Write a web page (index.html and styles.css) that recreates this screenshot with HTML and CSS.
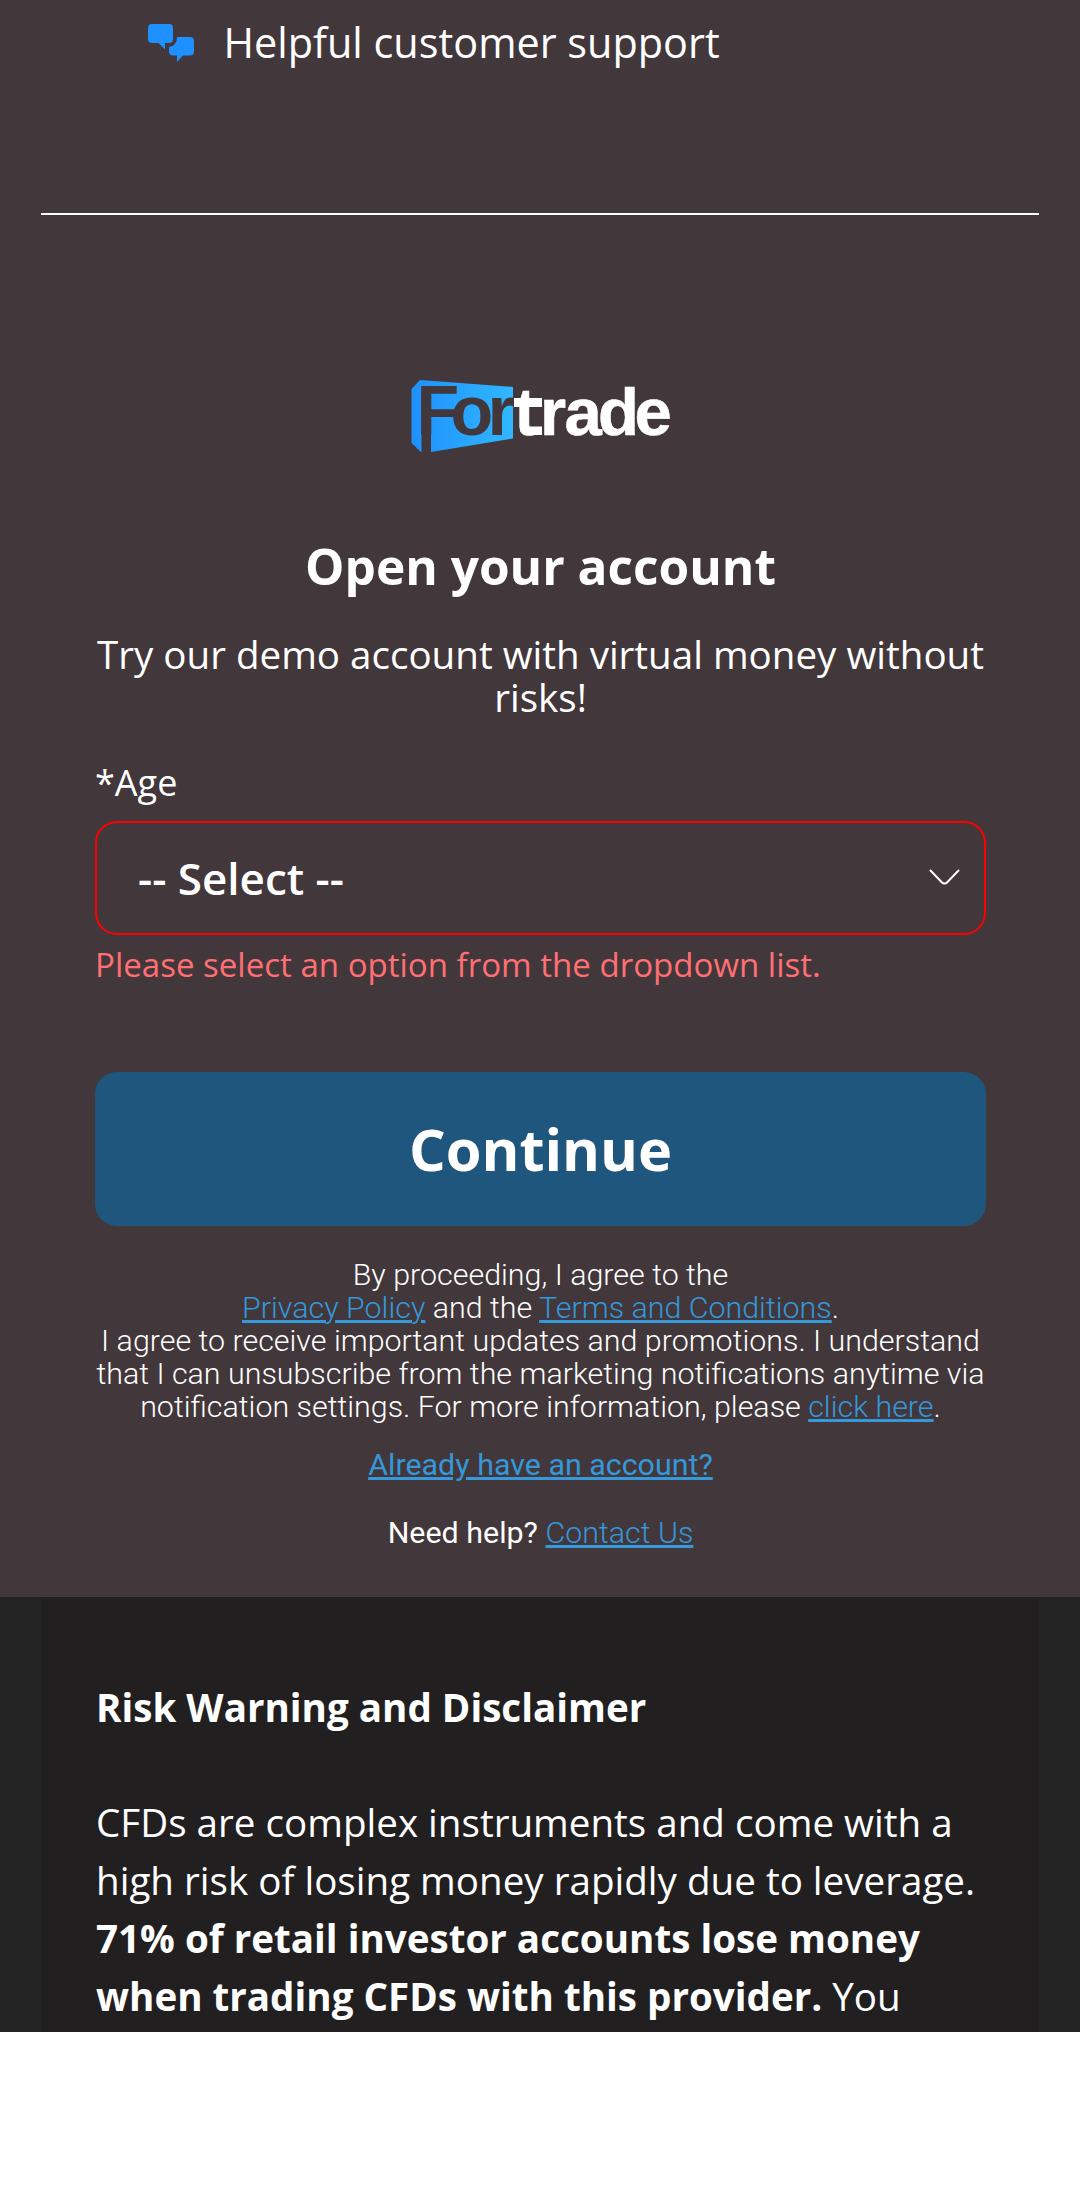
FILE: index.html
```html
<!DOCTYPE html>
<html lang="en">
<head>
<meta charset="utf-8">
<title>Fortrade</title>
<link rel="stylesheet" href="styles.css">
</head>
<body>
<main class="page">
  <section class="features">
    <div class="feature">
      <svg class="feature-icon" width="46" height="38" viewBox="0 0 46 38" fill="#1e90ff">
        <path d="M4 0H21Q25 0 25 4V15Q25 19 21 19H17V25.5L10.500 19H4Q0 19 0 15V4Q0 0 4 0Z"/>
        <path d="M29 13H42Q46 13 46 17V27.500Q46 31.500 42 31.500H35L29 38V31.500H25Q21 31.500 21 27.500V23Q29 22 29 13Z"/>
      </svg>
      <span>Helpful customer support</span>
    </div>
  </section>
  <section class="signup">
    <svg class="logo" width="260" height="74" viewBox="0 0 260 74" role="img" aria-label="Fortrade">
      <defs>
        <linearGradient id="panel" x1="0" x2="1"><stop offset="0" stop-color="#1e90ff"/><stop offset="1" stop-color="#30b8ff"/></linearGradient>
      </defs>
      <path d="M0.500 9L9 0L102 7V58.500L20 72L10 72L0.500 63Z" fill="url(#panel)"/>
      <path d="M10.500 14H20V73H10.500Z" fill="#42373a"/>
      <text class="logo-text" y="55"><tspan class="dark" x="5.600 39.500 76.500" font-size="70">For</tspan><tspan class="light" x="103.500 129 153.500 187 223.500" font-size="67">trade</tspan></text>
      <path d="M103 18H131V27H103ZM117 46.500H131V55H122Z" fill="#fff"/>
    </svg>
    <h1 class="title">Open your account</h1>
    <p class="subtitle">Try our demo account with virtual money without risks!</p>
    <form class="form">
      <label class="label" for="age">*Age</label>
      <div class="select-box">
        <select id="age" class="select"><option>-- Select --</option></select>
        <svg width="31" height="17" viewBox="0 0 31 17" fill="none" stroke="#fff" stroke-width="2" stroke-linecap="round"><path d="M1.500 1.500L12.500 13Q15.500 16 18.500 13L29.500 1.500"/></svg>
      </div>
      <p class="error">Please select an option from the dropdown list.</p>
      <button class="continue" type="button">Continue</button>
    </form>
    <p class="legal">By proceeding, I agree to the<br><a href="#">Privacy Policy</a> and the <a href="#">Terms and Conditions</a>.<br>I agree to receive important updates and promotions. I understand<br>that I can unsubscribe from the marketing notifications anytime via<br>notification settings. For more information, please <a href="#">click here</a>.</p>
    <p class="login"><a href="#">Already have an account?</a></p>
    <p class="help">Need help? <a href="#">Contact Us</a></p>
  </section>
  <footer class="risk">
    <div class="risk-body">
      <h2>Risk Warning and Disclaimer</h2>
      <p>CFDs are complex instruments and come with a<br>high risk of losing money rapidly due to leverage.<br><strong>71% of retail investor accounts lose money<br>when trading CFDs with this provider.</strong> You</p>
    </div>
  </footer>
</main>
</body>
</html>
```
FILE: styles.css
```css
* { box-sizing: border-box; }
body { margin: 0; background: #fff; color: #fff; font-family: "Open Sans", sans-serif; }
h1, h2, p { margin: 0; }
a { color: #3498db; text-decoration-thickness: 3px; }
.page { height: 2032px; overflow: hidden; background: #42373a; }
.features { height: 215px; margin: 0 41px; padding: 14px 0 0 107px; border-bottom: 2px solid #fff; }
.feature { display: flex; align-items: flex-start; gap: 29.5px; font-size: 41.4px; line-height: 57px; white-space: nowrap; }
.feature-icon { flex: none; margin-top: 10px; }
.signup { display: flex; flex-direction: column; align-items: center; height: 1382px; padding: 165px 94px 0 95px; text-align: center; }
.logo { flex: none; display: block; overflow: visible; }
.logo-text { font-family: "Liberation Sans", Arial, sans-serif; font-weight: 700; }
.dark { fill: #42373a; }
.light { fill: #fff; stroke: #fff; stroke-width: .6; }
.title { margin-top: 85px; font-size: 49.6px; line-height: 54px; font-weight: 700; }
.subtitle { width: 900px; margin-top: 40px; font-size: 38.55px; line-height: 43.3px; }
.form { display: flex; flex-direction: column; width: 891px; margin-top: 39px; text-align: left; }
.label { font-size: 36px; line-height: 48px; }
.select-box { display: flex; align-items: center; height: 114px; margin-top: 14px; padding: 0 24px 0 41px; border: 2px solid #f00; border-radius: 22px; }
.select { flex: 1; height: 100%; padding: 0; border: 0; appearance: none; background: none; color: #fff; font: 600 44px "Open Sans", sans-serif; }
.error { margin-top: 8px; font-size: 33.05px; line-height: 44px; color: #ff6f74; }
.continue { height: 154px; margin-top: 85px; padding: 0; border: 0; border-radius: 22px; background: #1f567e; color: #fff; font: 700 57.75px "Open Sans", sans-serif; }
.legal, .login, .help { font-family: Roboto, sans-serif; font-size: 30.4px; line-height: 33px; white-space: nowrap; }
.legal { margin-top: 32px; font-weight: 300; }
.login { margin-top: 25px; }
.help { margin-top: 35px; }
.help a { font-weight: 300; }
.risk { height: 435px; padding: 0 41px; background: #242424; }
.risk-body { height: 100%; padding: 81px 0 0 55px; background: #221f20; font-size: 38.6px; line-height: 58px; white-space: nowrap; }
.risk h2 { margin-bottom: 57px; font-size: 38.6px; line-height: 58px; }
```
